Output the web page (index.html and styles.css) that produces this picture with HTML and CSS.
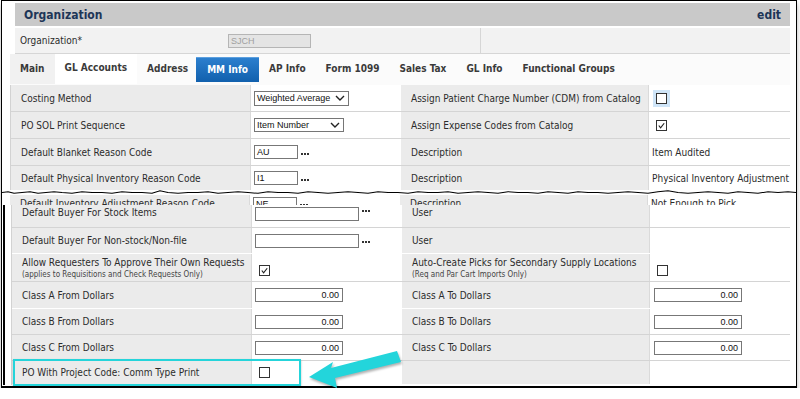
FILE: index.html
```html
<!DOCTYPE html>
<html lang="en">
<head>
    <meta charset="UTF-8">
    <meta name="viewport" content="width=device-width, initial-scale=1.0">
    <title>Organization - MM Info</title>
    <link rel="stylesheet" href="styles.css">
</head>
<body>
<div class="frame">
    <div class="panel-header">
        <span class="panel-title">Organization</span>
        <a href="#" class="panel-edit">edit</a>
    </div>

    <div class="org-row">
        <div class="org-label">Organization*</div>
        <div class="org-value"><span class="field field-disabled">SJCH</span></div>
        <div class="org-rest"></div>
    </div>

    <div class="tabs">
        <a href="#" class="tab tab-first">Main</a>
        <a href="#" class="tab tab-hover">GL Accounts</a>
        <a href="#" class="tab">Address</a>
        <a href="#" class="tab tab-active">MM Info</a>
        <a href="#" class="tab">AP Info</a>
        <a href="#" class="tab">Form 1099</a>
        <a href="#" class="tab">Sales Tax</a>
        <a href="#" class="tab">GL Info</a>
        <a href="#" class="tab">Functional Groups</a>
    </div>

    <!-- upper part of the page -->
    <div class="grid">
        <div class="row">
            <div class="cell lbl">Costing Method</div>
            <div class="cell val"><span class="select select-wide">Weighted Average<svg class="chev" viewBox="0 0 10 6"><polyline points="1,1 5,5 9,1"/></svg></span></div>
            <div class="cell lbl">Assign Patient Charge Number (CDM) from Catalog</div>
            <div class="cell val val-check"><span class="check check-focus"></span></div>
        </div>
        <div class="row">
            <div class="cell lbl">PO SOL Print Sequence</div>
            <div class="cell val"><span class="select select-mid">Item Number<svg class="chev" viewBox="0 0 10 6"><polyline points="1,1 5,5 9,1"/></svg></span></div>
            <div class="cell lbl">Assign Expense Codes from Catalog</div>
            <div class="cell val val-check"><span class="check"><svg viewBox="0 0 10 10"><polyline points="2,5 4,7.5 8,2.5"/></svg></span></div>
        </div>
        <div class="row">
            <div class="cell lbl">Default Blanket Reason Code</div>
            <div class="cell val"><span class="field field-code">AU</span><span class="dots"></span></div>
            <div class="cell lbl">Description</div>
            <div class="cell val">Item Audited</div>
        </div>
        <div class="row row-cut">
            <div class="cell lbl">Default Physical Inventory Reason Code</div>
            <div class="cell val"><span class="field field-code">I1</span><span class="dots"></span></div>
            <div class="cell lbl">Description</div>
            <div class="cell val">Physical Inventory Adjustment</div>
        </div>
    </div>

    <svg class="tear" viewBox="0 0 794 6" preserveAspectRatio="none">
        <polyline points="0,3 6,2 12,4 20,3 28,2 36,4 44,3 52,2 60,3 70,4 80,2 90,3 100,3 110,4 120,2 130,3 140,3 150,4 158,1 166,3 176,4 186,3 196,3 206,2 216,4 226,3 236,2 246,3 256,4 266,2 276,3 286,3 296,4 306,2 316,3 326,4 336,3 346,2 356,3 366,4 376,2 386,3 396,3 406,4 416,2 426,3 436,3 446,2 456,4 466,3 476,2 486,3 496,4 506,2 516,3 526,3 536,4 546,2 556,3 566,4 576,2 586,3 596,3 606,4 616,3 626,2 636,3 646,4 656,2 666,1 676,3 686,4 696,3 706,2 716,3 726,4 736,2 746,3 756,4 766,2 776,3 786,2 794,3"/>
    </svg>

    <div class="strip">
        <div class="row">
            <div class="cell lbl">Default Inventory Adjustment Reason Code</div>
            <div class="cell val"><span class="field field-code">NE</span><span class="dots"></span></div>
            <div class="cell lbl">Description</div>
            <div class="cell val">Not Enough to Pick</div>
        </div>
    </div>

    <!-- lower part of the page -->
    <div class="lower">
        <div class="grid grid-lower">
            <div class="row row-top">
                <div class="cell lbl">Default Buyer For Stock Items</div>
                <div class="cell val"><span class="field field-buyer"></span><span class="dots"></span></div>
                <div class="cell lbl">User</div>
                <div class="cell val"></div>
            </div>
            <div class="row row-noline row-26">
                <div class="cell lbl">Default Buyer For Non-stock/Non-file</div>
                <div class="cell val"><span class="field field-buyer"></span><span class="dots"></span></div>
                <div class="cell lbl">User</div>
                <div class="cell val"></div>
            </div>
            <div class="row row-28">
                <div class="cell lbl lbl-two">Allow Requesters To Approve Their Own Requests<small>(applies to Requisitions and Check Requests Only)</small></div>
                <div class="cell val val-check val-low"><span class="check"><svg viewBox="0 0 10 10"><polyline points="2,5 4,7.5 8,2.5"/></svg></span></div>
                <div class="cell lbl lbl-two">Auto-Create Picks for Secondary Supply Locations<small>(Req and Par Cart Imports Only)</small></div>
                <div class="cell val val-check val-low"><span class="check"></span></div>
            </div>
            <div class="row row-noline">
                <div class="cell lbl">Class A From Dollars</div>
                <div class="cell val"><span class="field field-num">0.00</span></div>
                <div class="cell lbl">Class A To Dollars</div>
                <div class="cell val val-num"><span class="field field-num">0.00</span></div>
            </div>
            <div class="row row-26">
                <div class="cell lbl">Class B From Dollars</div>
                <div class="cell val"><span class="field field-num">0.00</span></div>
                <div class="cell lbl">Class B To Dollars</div>
                <div class="cell val val-num"><span class="field field-num">0.00</span></div>
            </div>
            <div class="row row-26">
                <div class="cell lbl">Class C From Dollars</div>
                <div class="cell val"><span class="field field-num">0.00</span></div>
                <div class="cell lbl">Class C To Dollars</div>
                <div class="cell val val-num"><span class="field field-num">0.00</span></div>
            </div>
            <div class="row row-last row-noline">
                <div class="cell lbl">PO With Project Code: Comm Type Print</div>
                <div class="cell val val-check"><span class="check"></span></div>
                <div class="cell lbl"></div>
                <div class="cell val"></div>
            </div>
        </div>
    </div>
</div>

<!-- callout drawn over the screenshot -->
<div class="callout-box"></div>
<svg class="callout-arrow" viewBox="0 0 110 50">
    <polygon points="9,32 33,17 31,23 97,6 101,17 35,33 37,43"/>
</svg>
</body>
</html>
```

FILE: styles.css
```css
body {
    margin: 0;
    padding: 0;
    background-color: #fff;
    font-family: "DejaVu Sans Condensed", "DejaVu Sans", sans-serif;
    font-size: 10px;
    color: #2b2b2b;
    position: relative;
}

.frame {
    margin-left: 1px;
    width: 796px;
    height: 388px;
    box-sizing: border-box;
    border: 1px solid #000;
    border-bottom-width: 2px;
    padding: 2px 6px 0 8px;
    background-color: #fff;
    box-shadow: 0 4px 5px rgba(0, 0, 0, 0.3);
    overflow: hidden;
}

.panel-header {
    margin-left: 5px;
    height: 23px;
    background-color: #c9c9c9;
    display: flex;
    align-items: center;
    justify-content: space-between;
    padding: 0 9px;
    font-size: 12px;
    font-weight: bold;
    color: #1d3557;
}

.panel-edit {
    color: #1d3557;
    text-decoration: none;
}

.org-row {
    margin: 2px 0 0 5px;
    height: 26px;
    box-sizing: border-box;
    background-color: #f2f2f2;
    border-bottom: 1px solid #d6d6d6;
    display: flex;
    align-items: center;
}

.org-label {
    width: 205px;
    padding-left: 5px;
}

.org-value {
    width: 255px;
    height: 100%;
    display: flex;
    align-items: center;
    border-right: 1px solid #d6d6d6;
}

.tabs {
    height: 31px;
    display: flex;
    align-items: flex-start;
    background-color: #fbfbfb;
}

.tab {
    margin-top: 3px;
    height: 24px;
    line-height: 24px;
    padding: 0 10px;
    font-weight: bold;
    color: #3a3a3a;
    text-decoration: none;
}

.tab-first {
    background-color: #f1f1f1;
    margin-top: 0;
    height: 30px;
    line-height: 30px;
}

.tab-hover {
    margin-top: 0;
    height: 30px;
    line-height: 27px;
    background-color: #fff;
}

.tab-active {
    padding: 0 11px;
    margin-left: -2px;
    color: #fff;
    background: linear-gradient(#2c7fce, #1160ad);
    border-top: 1px solid #5b9fdf;
}

/* form grid */
.grid {
    border-left: 1px solid #d2d2d2;
}

.row {
    display: grid;
    grid-template-columns: 240px 150px 248px 142px;
    height: 27px;
    box-sizing: border-box;
    border-bottom: 1px solid #d4d4d4;
}

.row-cut {
    height: 24px;
    border-bottom: none;
}

.row-noline {
    border-bottom-color: transparent;
}

.row-26 {
    height: 26px;
}

.row-28 {
    height: 28px;
}

.row-top {
    height: 23px;
}

.row-top .cell {
    align-items: flex-start;
    padding-top: 2px;
}

.row-last {
    height: 24px;
}

.cell {
    display: flex;
    align-items: center;
    box-sizing: border-box;
    min-width: 0;
}

.lbl {
    background-color: #ebebeb;
    padding-left: 10px;
    border-right: 1px solid #dadada;
    white-space: nowrap;
}

.val {
    padding-left: 3px;
    white-space: nowrap;
}

.val-check {
    padding-left: 7px;
}

.val-low {
    padding-top: 6px;
}

.val-num {
    padding-left: 4px;
}

.lbl-two {
    flex-direction: column;
    align-items: flex-start;
    justify-content: center;
}

.lbl-two small {
    font-size: 8px;
    color: #444;
    margin-top: 2px;
}

/* inputs */
.field {
    display: inline-block;
    height: 14px;
    box-sizing: border-box;
    border: 1px solid #777;
    background-color: #fff;
    font-family: "Liberation Sans", Arial, sans-serif;
    font-size: 9px;
    line-height: 12px;
    padding: 0 2px;
    color: #111;
}

.field-disabled {
    width: 83px;
    background-color: #e4e4e4;
    border-color: #b5b5b5;
    color: #a0a0a0;
    margin-left: 3px;
}

.field-code {
    width: 44px;
}

.field-buyer {
    width: 104px;
}

.field-num {
    width: 88px;
    text-align: right;
    padding-right: 3px;
}

.dots {
    display: inline-block;
    width: 8px;
    height: 2px;
    margin: 3px 0 0 3px;
    background: repeating-linear-gradient(90deg, #333 0 2px, transparent 2px 3px);
}

.select {
    display: inline-flex;
    align-items: center;
    justify-content: space-between;
    height: 15px;
    box-sizing: border-box;
    border: 1px solid #767676;
    background-color: #fff;
    padding: 0 3px 0 2px;
    font-family: "Liberation Sans", Arial, sans-serif;
    font-size: 9px;
    color: #111;
}

.select-wide {
    width: 95px;
}

.select-mid {
    width: 90px;
    height: 14px;
}

.chev {
    width: 10px;
    height: 6px;
    fill: none;
    stroke: #222;
    stroke-width: 1.4;
}

.check {
    display: inline-block;
    width: 11px;
    height: 11px;
    box-sizing: border-box;
    border: 1px solid #333;
    background-color: #fff;
}

.check svg {
    display: block;
    width: 9px;
    height: 9px;
    fill: none;
    stroke: #222;
    stroke-width: 1.3;
}

.check-focus {
    box-shadow: 0 0 0 3px #cfe5f8;
}

/* torn screenshot edge */
.tear {
    display: block;
    margin: 0 -6px 0 -8px;
    width: 794px;
    height: 5px;
    fill: none;
    stroke: #000;
    stroke-width: 1.2;
    background-color: #fff;
}

.strip {
    height: 10px;
    overflow: hidden;
}

.strip .row {
    margin-top: -5px;
    border-bottom: none;
}

.lower {
    margin-left: -7px;
    border-left: 2px solid #000;
    padding-left: 6px;
}

/* callout annotation */
.callout-box {
    position: absolute;
    left: 13px;
    top: 359px;
    width: 288px;
    height: 27px;
    box-sizing: border-box;
    border: 2px solid #25d4da;
    box-shadow: 0 1px 2px rgba(0, 0, 0, 0.25);
}

.callout-arrow {
    position: absolute;
    left: 300px;
    top: 345px;
    width: 110px;
    height: 50px;
    fill: #23d5db;
    filter: drop-shadow(1px 2px 1px rgba(0, 0, 0, 0.3));
}
```
